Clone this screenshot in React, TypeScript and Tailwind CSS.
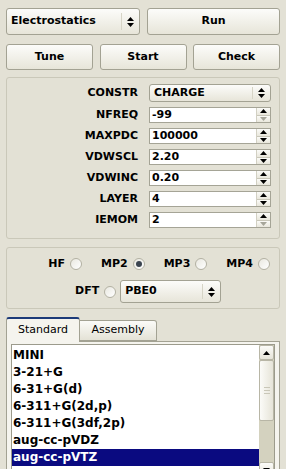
import React from "react";

const font = "font-['DejaVu_Sans',sans-serif]";

const UpDown: React.FC = () => (
  <svg width="7" height="10" viewBox="0 0 7 10" className="block">
    <path d="M3.5 0 L7 4 L0 4 Z" fill="#000" />
    <path d="M0 6 L7 6 L3.5 10 Z" fill="#000" />
  </svg>
);

const Combo: React.FC<{ label: string; className?: string }> = ({
  label,
  className = "",
}) => (
  <div
    className={`flex items-center rounded-[3px] border border-[#a3a293] bg-linear-to-b from-[#fcfcfa] to-[#e7e5d9] ${className}`}
  >
    <span className="flex-1 pl-[4px] text-[11px] font-bold text-black">
      {label}
    </span>
    <span className="h-[70%] w-px bg-[#d6d4c6]" />
    <span className="flex w-[17px] justify-center">
      <UpDown />
    </span>
  </div>
);

const Button: React.FC<{ label: string; className?: string }> = ({
  label,
  className = "",
}) => (
  <div
    className={`flex h-[26px] items-center justify-center rounded-[3px] border border-[#a3a293] bg-linear-to-b from-[#fcfcfa] to-[#e7e5d9] text-[11px] font-bold text-black ${className}`}
  >
    {label}
  </div>
);

const Arrow: React.FC<{ up?: boolean; off?: boolean }> = ({ up, off }) => (
  <svg width="7" height="4" viewBox="0 0 7 4" className="block">
    <path
      d={up ? "M3.5 0 L7 4 L0 4 Z" : "M0 0 L7 0 L3.5 4 Z"}
      fill={off ? "#a7a69a" : "#000"}
    />
  </svg>
);

const Spin: React.FC<{ value: string; downOff?: boolean }> = ({
  value,
  downOff,
}) => (
  <div className="flex h-[16px] w-[122px] border border-[#a5a496] bg-white">
    <span className="flex-1 pl-[2px] text-[11px] font-bold leading-[14px] text-black">
      {value}
    </span>
    <div className="flex w-[14px] flex-col border-l border-[#d2d0c3]">
      <div className="flex flex-1 items-center justify-center bg-linear-to-b from-[#fbfbf8] to-[#e9e7dc]">
        <Arrow up />
      </div>
      <div className="flex flex-1 items-center justify-center border-t border-[#c9c7b9] bg-linear-to-b from-[#fbfbf8] to-[#e9e7dc]">
        <Arrow off={downOff} />
      </div>
    </div>
  </div>
);

const Radio: React.FC<{ on?: boolean }> = ({ on }) => (
  <span className="flex h-[12px] w-[12px] items-center justify-center rounded-full border border-[#b3b1a3] bg-linear-to-br from-[#e9e8e0] to-white">
    {on && <span className="h-[6px] w-[6px] rounded-full bg-[#3b4450]" />}
  </span>
);

const params: { name: string; value: string; downOff?: boolean }[] = [
  { name: "NFREQ", value: "-99", downOff: true },
  { name: "MAXPDC", value: "100000" },
  { name: "VDWSCL", value: "2.20" },
  { name: "VDWINC", value: "0.20" },
  { name: "LAYER", value: "4" },
  { name: "IEMOM", value: "2", downOff: true },
];

const basis = [
  "MINI",
  "3-21+G",
  "6-31+G(d)",
  "6-311+G(2d,p)",
  "6-311+G(3df,2p)",
  "aug-cc-pVDZ",
  "aug-cc-pVTZ",
];

export default function App() {
  return (
    <div
      className={`h-[469px] w-[286px] overflow-hidden bg-[#e3e1d5] px-[6px] pt-[8px] ${font}`}
    >
      <div className="flex justify-between">
        <Combo label="Electrostatics" className="h-[27px] w-[134px]" />
        <Button label="Run" className="h-[27px] w-[133px]" />
      </div>
      <div className="mt-[9px] flex justify-between">
        <Button label="Tune" className="w-[87px]" />
        <Button label="Start" className="w-[87px]" />
        <Button label="Check" className="w-[87px]" />
      </div>

      <div className="mt-[7px] flex h-[162px] flex-col gap-[5px] rounded-[3px] border border-[#cac8b9] pt-[6px]">
        <div className="flex h-[18px] items-center">
          <span className="w-[142px] pr-[11px] text-right text-[11px] font-bold text-black">
            CONSTR
          </span>
          <Combo label="CHARGE" className="h-[18px] w-[122px]" />
        </div>
        {params.map((p) => (
          <div key={p.name} className="flex h-[16px] items-center">
            <span className="w-[142px] pr-[11px] text-right text-[11px] font-bold text-black">
              {p.name}
            </span>
            <Spin value={p.value} downOff={p.downOff} />
          </div>
        ))}
      </div>

      <div className="mt-[8px] flex h-[62px] flex-col items-end rounded-[3px] border border-[#cac8b9] pr-[9px] pt-[9px]">
        <div className="flex h-[14px] items-center gap-[19px]">
          {["HF", "MP2", "MP3", "MP4"].map((m) => (
            <span key={m} className="flex items-center gap-[5px]">
              <span className="text-[11px] font-bold text-black">{m}</span>
              <Radio on={m === "MP2"} />
            </span>
          ))}
        </div>
        <div className="mt-[9px] flex items-center self-start pl-[68px]">
          <span className="mr-[5px] text-[11px] font-bold text-black">DFT</span>
          <Radio />
          <Combo label="PBE0" className="ml-[4px] h-[23px] w-[101px]" />
        </div>
      </div>

      <div className="mt-[8px] flex items-end">
        <div className="relative z-10 -mb-px flex h-[25px] w-[74px] items-center justify-center rounded-t-[3px] border border-b-0 border-[#a3a293] border-t-[#1c3a78] border-t-2 bg-[#f5f4ee] text-[11px] text-black">
          Standard
        </div>
        <div className="flex h-[21px] w-[77px] items-center justify-center rounded-tr-[3px] border border-l-0 border-[#a3a293] bg-linear-to-b from-[#fbfbf8] to-[#e4e2d6] text-[11px] text-black">
          Assembly
        </div>
      </div>
      <div className="border border-[#a3a293] bg-[#f5f4ee] px-[4px] pt-[2px]">
        <div className="flex h-[134px] border border-[#9c9b8c] bg-white">
          <div className="flex-1 pt-[2px]">
            {basis.map((b) => (
              <div
                key={b}
                className={`h-[17px] pl-[1px] text-[12px] font-bold leading-[17px] ${
                  b === "aug-cc-pVTZ"
                    ? "bg-[#0a0a80] text-white"
                    : "text-black"
                }`}
              >
                {b}
              </div>
            ))}
          </div>
          <div className="flex w-[15px] flex-col bg-[#d4d2bf]">
            <div className="flex h-[15px] shrink-0 items-center justify-center rounded-[2px] border border-[#b8b6a6] bg-linear-to-b from-[#fbfbf8] to-[#e6e4d8]">
              <Arrow up />
            </div>
            <div className="flex h-[61px] shrink-0 flex-col items-center justify-center gap-[2px] rounded-[2px] border border-[#b8b6a6] bg-linear-to-r from-[#fbfbf8] to-[#e6e4d8]">
              <span className="h-px w-[6px] bg-[#c9c7b8]" />
              <span className="h-px w-[6px] bg-[#c9c7b8]" />
              <span className="h-px w-[6px] bg-[#c9c7b8]" />
            </div>
            <div className="flex-1" />
            <div className="flex h-[15px] shrink-0 items-center justify-center rounded-[2px] border border-[#b8b6a6] bg-linear-to-b from-[#fbfbf8] to-[#e6e4d8]">
              <Arrow />
            </div>
          </div>
        </div>
      </div>
    </div>
  );
}
